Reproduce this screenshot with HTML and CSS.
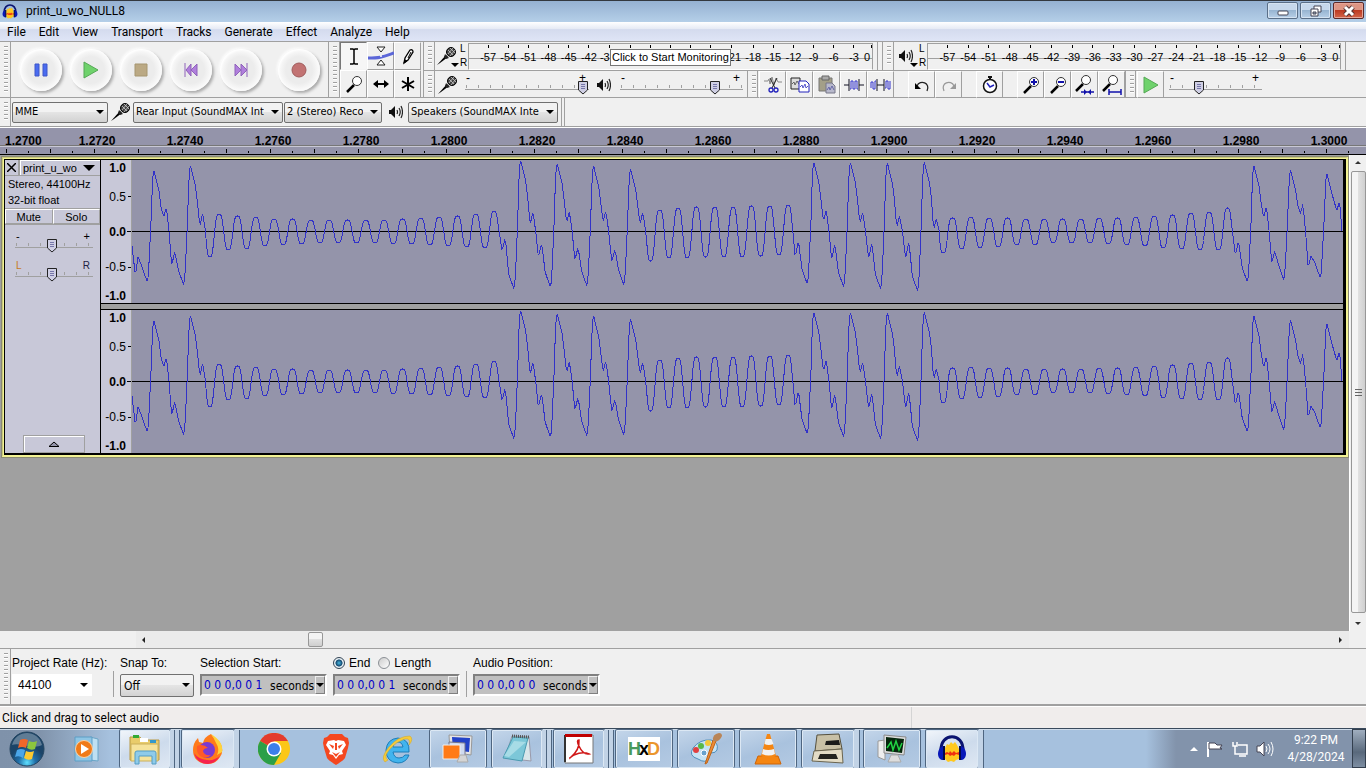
FILE: index.html
```html
<!DOCTYPE html>
<html lang="en">
<head>
  <meta charset="UTF-8" />
  <meta name="viewport" content="width=device-width, initial-scale=1" />
  <title>print_u_wo_NULL8</title>
  <link rel="stylesheet" href="styles.css">
</head>
<body>
  <!-- shared icons -->
  <svg class="defs" width="0" height="0" aria-hidden="true">
    <symbol id="i-mic" viewBox="0 0 20 20">
      <path d="M0 19L9 9l2 2-8 6z" fill="#000"/>
      <path d="M8 8l4 4-3 1-2-2z" fill="#222"/>
      <circle cx="14" cy="6" r="4.500" fill="#444" stroke="#000"/>
      <path d="M11 4l5 5M13 2l5 5M11 8l5-6M13 10l5-6" stroke="#ccc" stroke-width=".8"/>
    </symbol>
    <symbol id="i-spk" viewBox="0 0 14 14">
      <path d="M0 5h2l4-4v12l-4-4H0z" fill="#111"/>
      <path d="M8 5q1 2 0 4M10 3q2.500 4 0 8M12 1q3 6 0 12" fill="none" stroke="#222" stroke-width="1.200"/>
    </symbol>
    <symbol id="i-lens" viewBox="0 0 24 24">
      <path d="M5 20l7-7" stroke="#000" stroke-width="2.500"/>
      <circle cx="15" cy="9" r="4.500" fill="#fff" stroke="#333"/>
    </symbol>
    <symbol id="i-audacity" viewBox="0 0 30 28">
      <path d="M4 16C3 -3 27 -3 26 16" fill="none" stroke="#0a1370" stroke-width="3"/>
      <path d="M8 13l2-4 2 1 2-3 2 2 2-2 2 3 2 4v10l-3 1-2 2-3-1-3 1-3-3z" fill="#ffc81e"/>
      <path d="M8 18l2-1 2 1 1-2 2 2 2-2 2 2 3-1v3l-3-1-2 2-2-1-2 1-2-2-3 1z" fill="#f03010"/>
      <path d="M7 11v14C-1 26-1 12 7 11zM23 11v14c8 1 8-13 0-14z" fill="#0818b8"/>
      <path d="M7 11v14M23 11v14" stroke="#04094a" stroke-width="2"/>
    </symbol>
    <symbol id="i-play" viewBox="0 0 16 18">
      <path d="M1 1l14 8-14 8z" fill="#6fd26c" stroke="#55a855"/>
    </symbol>
  </svg>

  <header class="titlebar">
    <svg class="app-icon" width="16" height="15"><use href="#i-audacity"/></svg>
    <h1>print_u_wo_NULL8</h1>
    <div class="win-btns">
      <button aria-label="Minimize"><svg width="14" height="12"><rect x="2" y="6" width="10" height="4" rx="1" fill="#fff" stroke="#445"/></svg></button>
      <button aria-label="Restore"><svg width="14" height="12" fill="#fff" stroke="#445"><path d="M5 1h7v6H5z"/><path d="M2 4h7v7H2z"/><path d="M4 7h3v2H4z" fill="#9ab"/></svg></button>
      <button class="close" aria-label="Close"><svg width="14" height="12"><path d="M3 2l8 8M11 2l-8 8" stroke="#533" stroke-width="5"/><path d="M3 2l8 8M11 2l-8 8" stroke="#fff" stroke-width="3"/></svg></button>
    </div>
  </header>

  <nav class="menubar">
    <a href="#">File</a><a href="#">Edit</a><a href="#">View</a><a href="#">Transport</a><a href="#">Tracks</a><a href="#">Generate</a><a href="#">Effect</a><a href="#">Analyze</a><a href="#">Help</a>
  </nav>

  <!-- Toolbars -->
  <section class="toolbars">
    <div class="bar transport">
      <i class="grip"></i>
      <button class="round" aria-label="Pause"><svg width="14" height="14"><path d="M1 1h4v12H1zM9 1h4v12H9z" fill="#4a6cf0" stroke="#3f57c8"/></svg></button>
      <button class="round" aria-label="Play"><svg width="16" height="18"><use href="#i-play"/></svg></button>
      <button class="round" aria-label="Stop"><svg width="14" height="14"><path d="M1 1h12v12H1z" fill="#bba984" stroke="#a69670"/></svg></button>
      <button class="round" aria-label="Skip to Start"><svg width="14" height="14"><path d="M7 1v12L2 7zM13 1v12L7 7z" fill="#b07fdc" stroke="#8f62ba"/><path d="M1 0v14" stroke="#8f62ba"/></svg></button>
      <button class="round" aria-label="Skip to End"><svg width="14" height="14"><path d="M1 1v12l6-6zM7 1v12l6-6z" fill="#b07fdc" stroke="#8f62ba"/><path d="M13 0v14" stroke="#8f62ba"/></svg></button>
      <button class="round rec" aria-label="Record"><svg width="16" height="16"><circle cx="8" cy="8" r="7" fill="#c27373" stroke="#a05c5c"/></svg></button>
    </div>

    <div class="bar tools">
      <i class="grip"></i>
      <div class="tool-grid">
        <button class="tb on" aria-label="Selection Tool"><svg width="24" height="24"><path d="M8 5h3l1 1 1-1h3M8 20h3l1-1 1 1h3M12 6v13" fill="none" stroke="#000" stroke-width="1.500"/></svg></button>
        <button class="tb" aria-label="Envelope Tool"><svg width="26" height="24"><path d="M0 14C12 14 14 13 26 9" fill="none" stroke="#5b66d8" stroke-width="3"/><path d="M9 3h8l-4 5zM9 21h8l-4-5z" fill="#fff" stroke="#222"/><circle cx="13" cy="12" r="1" fill="#fff"/></svg></button>
        <button class="tb" aria-label="Draw Tool"><svg width="24" height="24"><path d="M8 19l1-5 5-8q3-1 3 2l-5 8z" fill="#fff" stroke="#000" stroke-width="1.300"/><path d="M8 19l1-3 2 1zM12 14l3-6" stroke="#000"/></svg></button>
        <button class="tb" aria-label="Zoom Tool"><svg width="24" height="24"><use href="#i-lens"/></svg></button>
        <button class="tb" aria-label="Time Shift Tool"><svg width="24" height="24"><path d="M5 12h14" stroke="#000" stroke-width="2"/><path d="M4 12l5-4v8zM20 12l-5-4v8z"/></svg></button>
        <button class="tb" aria-label="Multi-Tool"><svg width="24" height="24"><path d="M12 5v14M6 9l12 7M18 9L6 16" stroke="#000" stroke-width="2"/></svg></button>
      </div>
    </div>

    <div class="stack">
      <div class="row">
        <div class="bar meterbar">
          <i class="grip"></i>
          <button class="meter-menu" aria-label="Recording level"><svg width="20" height="20"><use href="#i-mic"/></svg><i class="caret"></i></button>
          <span class="lr"><b>L</b><b>R</b></span>
          <div class="meter">
            <!-- the marks under the tooltip carry no number -->
            <div class="scale"><span>-57</span><span>-54</span><span>-51</span><span>-48</span><span>-45</span><span>-42</span><span class="cut-right">-3</span><span></span><span></span><span></span><span></span><span></span><span class="cut-left">21</span><span>-18</span><span>-15</span><span>-12</span><span>-9</span><span>-6</span><span>-3</span><span>0</span></div>
            <div class="tooltip">Click to Start Monitoring</div>
          </div>
        </div>
        <div class="bar meterbar">
          <i class="grip"></i>
          <button class="meter-menu" aria-label="Playback level"><svg width="14" height="14"><use href="#i-spk"/></svg><i class="caret"></i></button>
          <span class="lr"><b>L</b><b>R</b></span>
          <div class="meter">
            <div class="scale"><span>-57</span><span>-54</span><span>-51</span><span>-48</span><span>-45</span><span>-42</span><span>-39</span><span>-36</span><span>-33</span><span>-30</span><span>-27</span><span>-24</span><span>-21</span><span>-18</span><span>-15</span><span>-12</span><span>-9</span><span>-6</span><span>-3</span><span>0</span></div>
          </div>
        </div>
      </div>

      <div class="row">
        <div class="bar mixer">
          <i class="grip"></i>
          <svg width="20" height="20"><use href="#i-mic"/></svg>
          <label class="slider rec-vol"><span>-</span><span>+</span><input type="range" min="0" max="100" value="100" aria-label="Recording volume"></label>
          <svg class="spk" width="14" height="14"><use href="#i-spk"/></svg>
          <label class="slider play-vol"><span>-</span><span>+</span><input type="range" min="0" max="100" value="80" aria-label="Playback volume"></label>
        </div>
        <div class="bar edit">
          <i class="grip"></i>
          <button class="tb" aria-label="Cut"><svg width="24" height="24" fill="none"><path d="M3 8h4l1-2 1 5 2-7 2 8 2-7 2 4h4" stroke="#888"/><path d="M9 5l5 10M16 5l-5 10" stroke="#222"/><circle cx="10" cy="17" r="2" stroke="#22b" stroke-width="1.300"/><circle cx="15" cy="17" r="2" stroke="#22b" stroke-width="1.300"/></svg></button>
          <button class="tb" aria-label="Copy"><svg width="24" height="24" fill="none"><path d="M3 5h9v11H3z" fill="#ddd" stroke="#222"/><path d="M4 11l2-2 1 3 2-4 2 3" stroke="#666"/><path d="M11 8h7l3 3v8H11z" fill="#fff" stroke="#22b"/><path d="M12 14l2-2 1 3 2-4 1 4 2-2" stroke="#55c"/></svg></button>
          <button class="tb" aria-label="Paste"><svg width="24" height="24" fill="none"><path d="M4 5h13v13H4z" fill="#a39f88" stroke="#777"/><path d="M7 3h7v4H7z" fill="#aaa" stroke="#666"/><path d="M11 10h6l3 3v7h-9z" fill="#b8b9cc" stroke="#778"/><path d="M12 17l2-3 1 3 2-4 2 4" stroke="#66a"/></svg></button>
          <button class="tb" aria-label="Trim"><svg width="24" height="24" fill="none"><path d="M2 12h5M17 12h5M7 6v12M17 6v12" stroke="#112"/><path d="M8 16h1V8h2v8h2V8h2v8h1" stroke="#33c"/></svg></button>
          <button class="tb" aria-label="Silence"><svg width="24" height="24" fill="none"><path d="M8 12h7M8 6v12M15 6v12" stroke="#112"/><path d="M2 15V9h2v7h2V8h1M16 15h1V8h2v8h2V8" stroke="#33c"/></svg></button>
          <button class="tb gap" aria-label="Undo"><svg width="24" height="24"><path d="M7 13c3-7 14-3 10 5" fill="none" stroke="#222" stroke-width="1.300"/><path d="M5 10v6h6z"/></svg></button>
          <button class="tb" aria-label="Redo"><svg width="24" height="24"><path d="M17 13c-3-7-14-3-10 5" fill="none" stroke="#999" stroke-width="1.300"/><path d="M19 10v6h-6z" fill="#999"/></svg></button>
          <button class="tb gap" aria-label="Sync-Lock"><svg width="24" height="24"><circle cx="12" cy="13" r="6.500" fill="#fff" stroke="#111" stroke-width="1.500"/><path d="M10 4h4M12 4v3" stroke="#111" stroke-width="2"/><path d="M9 10l3 4 4-2" fill="none" stroke="#22b" stroke-width="1.500"/></svg></button>
          <button class="tb gap" aria-label="Zoom In"><svg width="24" height="24"><use href="#i-lens"/><path d="M15 6v6M12 9h6" stroke="#11a" stroke-width="2"/></svg></button>
          <button class="tb" aria-label="Zoom Out"><svg width="24" height="24"><use href="#i-lens"/><path d="M12 9h6" stroke="#11a" stroke-width="2"/></svg></button>
          <button class="tb" aria-label="Fit Selection"><svg width="24" height="24"><use href="#i-lens" width="24" height="24" x="-2" y="-2"/><path d="M8 19h13" stroke="#11a" stroke-width="1.500"/><path d="M14 19l-3-3v6zM15 19l3-3v6z" fill="#11a"/></svg></button>
          <button class="tb" aria-label="Fit Project"><svg width="24" height="24"><use href="#i-lens" width="24" height="24" x="-2" y="-2"/><path d="M9 19h12M9 16v6M21 16v6" stroke="#11a" stroke-width="1.500"/></svg></button>
        </div>
        <div class="bar transcription">
          <i class="grip"></i>
          <button class="tb" aria-label="Play at Speed"><svg width="16" height="18"><use href="#i-play"/></svg></button>
          <label class="slider speed"><span>-</span><span>+</span><input type="range" min="0" max="100" value="30" aria-label="Playback speed"></label>
        </div>
      </div>
    </div>
  </section>

  <section class="devices">
    <i class="grip"></i>
    <select class="combo host" aria-label="Audio host"><option>MME</option></select>
    <svg width="20" height="20"><use href="#i-mic"/></svg>
    <select class="combo wide" aria-label="Recording device"><option>Rear Input (SoundMAX Int</option></select>
    <select class="combo chan" aria-label="Recording channels"><option>2 (Stereo) Reco</option></select>
    <svg class="spk" width="14" height="14"><use href="#i-spk"/></svg>
    <select class="combo wide" aria-label="Playback device"><option>Speakers (SoundMAX Integ</option></select>
    <i class="dock-end"></i>
  </section>

  <div class="timeline">
    <div class="times"><span>1.2700</span><span>1.2720</span><span>1.2740</span><span>1.2760</span><span>1.2780</span><span>1.2800</span><span>1.2820</span><span>1.2840</span><span>1.2860</span><span>1.2880</span><span>1.2900</span><span>1.2920</span><span>1.2940</span><span>1.2960</span><span>1.2980</span><span>1.3000</span></div>
    <div class="ticks"></div>
  </div>

  <!-- Tracks -->
  <main class="project">
    <div class="tracks">
      <article class="track">
        <div class="panel">
          <div class="head"><button class="x" aria-label="Close track"><svg width="9" height="9"><path d="M0 0l9 9M9 0L0 9" stroke="#000" stroke-width="1.500"/></svg></button><button class="name">print_u_wo<i></i></button></div>
          <p>Stereo, 44100Hz<br>32-bit float</p>
          <div class="ms"><button>Mute</button><button>Solo</button></div>
          <label class="slider"><span>-</span><span>+</span><input type="range" min="0" max="100" value="47" aria-label="Gain"></label>
          <label class="slider pan"><span>L</span><span>R</span><input type="range" min="0" max="100" value="47" aria-label="Pan"></label>
          <button class="collapse" aria-label="Collapse"><svg width="12" height="6"><path d="M1 5.500h10L6 1z" fill="#9595aa" stroke="#000"/></svg></button>
        </div>
        <div class="channels">
          <div class="channel">
            <div class="vruler"><b>1.0</b><span>0.5</span><b>0.0</b><span>-0.5</span><b>-1.0</b></div>
            <svg class="wave" viewBox="0 0 1212 143" preserveAspectRatio="none"><path class="zero" d="M0 71.500H1212"/><path class="line"/></svg>
          </div>
          <div class="channel">
            <div class="vruler"><b>1.0</b><span>0.5</span><b>0.0</b><span>-0.5</span><b>-1.0</b></div>
            <svg class="wave" viewBox="0 0 1212 143" preserveAspectRatio="none"><path class="zero" d="M0 71.500H1212"/><path class="line"/></svg>
          </div>
        </div>
      </article>
    </div>
    <div class="vscroll"><i class="up"></i><div class="thumb"></div><i class="down"></i></div>
  </main>
  <div class="hscroll"><div class="rail"><i class="left"></i><div class="thumb"></div><i class="right"></i></div></div>

  <!-- Selection toolbar -->
  <section class="selection">
    <i class="grip"></i>
    <div class="field rate"><label for="rate">Project Rate (Hz):</label><select id="rate"><option>44100</option></select></div>
    <i class="sep"></i>
    <div class="field snap"><label for="snap">Snap To:</label><select id="snap" class="combo"><option>Off</option></select></div>
    <div class="field"><label for="start">Selection Start:</label><div class="time"><input id="start" value="0 0 0,0 0 1"><span>seconds</span><button aria-label="Start format"></button></div></div>
    <div class="field">
      <div class="radios"><label><input type="radio" name="len" checked>End</label><label><input type="radio" name="len">Length</label></div>
      <div class="time"><input value="0 0 0,0 0 1" aria-label="Selection end"><span>seconds</span><button aria-label="End format"></button></div>
    </div>
    <i class="sep"></i>
    <div class="field"><label for="pos">Audio Position:</label><div class="time"><input id="pos" value="0 0 0,0 0 0"><span>seconds</span><button aria-label="Position format"></button></div></div>
  </section>

  <footer class="status"><span>Click and drag to select audio</span><span></span></footer>

  <!-- Taskbar -->
  <nav class="taskbar">
    <button class="orb" aria-label="Start"><svg width="38" height="38">
      <defs><radialGradient id="orb" cy=".9"><stop offset="0" stop-color="#5fe0ff"/><stop offset=".5" stop-color="#1f6ea8"/><stop offset="1" stop-color="#1b4468"/></radialGradient></defs>
      <circle cx="19" cy="19" r="17" fill="url(#orb)" stroke="#24445f"/><path d="M4 15C8-1 30-1 34 15 25 20 12 12 4 15z" fill="#fff" opacity=".3"/>
      <path d="M12 10q4-2 8 0l-2 8q-4-2-8 0z" fill="#f0672a"/><path d="M21 11q4 2 8 0l-2 8q-4 2-8-1z" fill="#8cc63e"/><path d="M9 20q4-2 8 0l-2 8q-4-3-8-1z" fill="#4ba6e8"/><path d="M18 21q4 2 8 0l-2 8q-4 2-8-1z" fill="#fcc92f"/></svg></button>
    <button class="pin" aria-label="Media Player"><svg width="30" height="30"><path d="M18 3l8 2v22l-8-1z" fill="#bfe0f2" stroke="#6ba6c8"/><path d="M3 3h17v24H3z" fill="#8ec5e4" stroke="#5c9dc4"/><circle cx="12" cy="15" r="8.500" fill="#f07a18" stroke="#fbd3a6"/><path d="M9 10l8 5-8 5z" fill="#fff"/></svg></button>
    <button class="task on w52 pile2" aria-label="Explorer"><svg width="34" height="32"><path d="M2 4h10l2 3h17v20H2z" fill="#e9cc6b" stroke="#b89842"/><path d="M5 2h6v3H5z" fill="#3a3"/><path d="M12 5h8v4h-8z" fill="#fff"/><path d="M22 7h6v3h-6z" fill="#39c"/><path d="M3 11h27v17H3z" fill="#f6e39a" stroke="#cbb05a"/><path d="M7 31V20q0-2 2-2h17q2 0 2 2v11h-4v-8H11v8z" fill="#8fcbe9" stroke="#559dc5"/></svg></button>
    <button class="task on w53 pile1" aria-label="Firefox"><svg width="32" height="32"><path d="M19 1q3 5 8 7 6 9 1 16-5 8-14 7Q1 29 1 17q0-7 5-12l1 4 4 1q1-6 8-9z" fill="#ff7a1a"/><path d="M19 1q3 4 5 9 4 6 1 12l5-3Q32 9 19 1z" fill="#ffd23a"/><circle cx="15" cy="17" r="8" fill="#7a3ad0"/><path d="M5 13q6-3 11 2-4 0-5 3 1 5 8 4-5 5-11 1-4-4-3-10z" fill="#ff5a28"/><path d="M2 20q3 11 14 11 8-1 12-8-6 5-13 4Q6 26 2 20z" fill="#f5224f"/></svg></button>
    <button class="pin" aria-label="Chrome"><svg width="32" height="32"><circle cx="16" cy="16" r="16" fill="#fbc718"/><path d="M16 16L2.100 8A16 16 0 0 1 29.900 8z" fill="#e33b2e"/><path d="M16 16L2.100 8A16 16 0 0 0 16 32l7-12z" fill="#2b9f48"/><path d="M16 8h14l-7 12z" fill="#fbc718"/><circle cx="16" cy="16" r="7.500" fill="#fff"/><circle cx="16" cy="16" r="6" fill="#3c7fea"/></svg></button>
    <button class="pin" aria-label="Brave"><svg width="28" height="32"><path d="M8 1h12l3 3 3 1 1 5-1 5-3 10q-1 2-9 7-8-5-9-7L2 15l-1-5 1-5 3-1z" fill="#f4471f"/><path d="M6 8l6-1 2 1 2-1 6 1 2 4-4 6 1 3-4 1-3 4-3-4-4-1 1-3-4-6z" fill="#fff"/><path d="M7 11l5 2-1 3zM21 11l-5 2 1 3zM10 19l4 2 4-2-4 5zM13 10h2v7h-2z" fill="#f4471f"/></svg></button>
    <button class="pin" aria-label="Internet Explorer"><svg width="34" height="32"><path d="M28 19H12q1 6 6 6 4 0 6-3h4q-3 8-11 8Q5 29 5 17 6 6 17 5q12 1 11 14zM12 14h10q-1-5-5-5-4 0-5 5z" fill="#41b4ee" stroke="#1c7db8"/><path d="M4 29q-5-4 4-15T29 3q4 3-1 9 2-7-4-6-8 2-15 10T7 27z" fill="#f5cb3b" stroke="#d3a520" stroke-width=".5"/></svg></button>
    <button class="task w58" aria-label="Virtual machines"><svg width="34" height="32"><path d="M8 2l23 1-1 19-21-3z" fill="#e4e4e4" stroke="#999"/><path d="M11 4l18 1-1 14-16-2z" fill="#2343c8"/><path d="M8 9l16 1v14H8z" fill="#cfdaf0" stroke="#778"/><path d="M2 12h17v14H2z" fill="#ff7a16" stroke="#eee"/><path d="M19 22h6l2 7H16z" fill="#d5d5d5" stroke="#aaa"/></svg></button>
    <button class="task w52 pile2" aria-label="Notepad"><svg width="32" height="32"><path d="M11 3l17 1 2 24-26-3z" fill="#d9e6ea" stroke="#99a"/><path d="M12 4l15 1-6 23-19-3z" fill="#7cc7d8" stroke="#4a9ab0"/><path d="M11 3l17 1" stroke="#555" stroke-width="3" stroke-dasharray="1 1"/><path d="M13 8l12 1L8 24l-5-1z" fill="#c4eaf0" opacity=".6"/></svg></button>
    <button class="task w52 pile2" aria-label="Adobe Reader"><svg width="30" height="30"><path d="M1 1h28v28H1z" fill="#fff" stroke="#777"/><path d="M1 1v27" stroke="#333" stroke-width="2"/><path d="M1 0h27v3H1z" fill="#c00000"/><path d="M6 24Q16 16 15 6q-3 0 0 6 4 9 10 8-6-3-15 1-4 3-4 2z" fill="none" stroke="#d01818" stroke-width="1.500"/></svg></button>
    <button class="task w58" aria-label="HxD"><span class="hxd"><b>H</b><b>x</b><b>D</b></span></button>
    <button class="task w58" aria-label="Paint"><svg width="34" height="32"><path d="M4 15q7-9 18-8 8 2 6 10-1 3-6 3-3 1-2 5-3 6-11 1Q-1 23 4 15z" fill="#c6e3f4" stroke="#4f8fbd"/><circle cx="7" cy="17" r="3" fill="#e04040"/><circle cx="12" cy="13" r="3" fill="#58b848"/><circle cx="19" cy="10" r="3" fill="#f4c83a"/><circle cx="15" cy="20" r="3" fill="#68a2cc" stroke="#fff"/><path d="M27 8l-9 22-2 1 8-24z" fill="#ef8b32" stroke="#bd6418"/><path d="M24 8q-1-7 6-8 3 0 3 3-3 7-9 5z" fill="#b98558"/></svg></button>
    <button class="task w58" aria-label="VLC"><svg width="30" height="32"><path d="M5 23h20l3 8H2z" fill="#f58612" stroke="#cc6508"/><path d="M14 1h3l6 22q-7 5-15 0z" fill="#f58612"/><path d="M12.500 6h6l2 5q-5 2-9 0zM10 16q5 2 11 0l1 5q-6 3-13 0z" fill="#f2f2f2"/></svg></button>
    <button class="task w53 pile1" aria-label="DOSBox"><svg width="34" height="32"><path d="M6 2l22-1 3 15-27 2z" fill="#c8c0a6" stroke="#55503e"/><path d="M15 8l13-1 1 5H14z" fill="#1b1b1b"/><path d="M3 18l28-2 1 14-31-2z" fill="#e3dcc6" stroke="#6a644e"/><path d="M9 21h16l2 5H7z" fill="#23231f"/></svg></button>
    <button class="task w58" aria-label="System monitor"><svg width="34" height="32"><path d="M3 8l7-1v20l-7-3z" fill="#eee" stroke="#999"/><path d="M9 2l22 2-2 18-20-2z" fill="#ddd" stroke="#888"/><path d="M11 4l18 2-2 14-16-2z" fill="#06250c"/><path d="M12 15l4-6 2 8 3-9 3 9 3-7" fill="none" stroke="#21d443" stroke-width="1.500"/><path d="M16 22h7l3 7H13z" fill="#ddd" stroke="#aaa"/></svg></button>
    <button class="task on w53 pile1" aria-label="Audacity"><svg width="30" height="28"><use href="#i-audacity"/></svg></button>
    <div class="tray">
      <svg width="10" height="6"><path d="M1 5l4-4 4 4z" fill="#fff"/></svg>
      <svg width="18" height="18"><path d="M2 2v15" stroke="#fff" stroke-width="2"/><path d="M3 3h6l2 2h5l-2 3 2 1H9L8 9H3z" fill="#fff" stroke="#445"/></svg>
      <svg width="18" height="18" fill="none" stroke="#fff" stroke-width="1.500"><path d="M7 5h9v9H6M8 16h7M2 2v4h4V2M4 6v8h3"/></svg>
      <svg width="18" height="18"><path d="M1 6h3l4-4v14l-4-4H1z" fill="#fff" stroke="#445"/><path d="M10 6q2 3 0 6M12 4q4 5 0 10M15 2q4 7 0 14" fill="none" stroke="#fff"/></svg>
      <time>9:22 PM<br>4/28/2024</time>
    </div>
    <button class="show-desktop" aria-label="Show desktop"></button>
  </nav>

  <script src="waveform.js"></script>
</body>
</html>
```
FILE: styles.css
```css
* { box-sizing: border-box; }
html, body { height: 100%; }
body {
  margin: 0;
  display: flex;
  flex-direction: column;
  overflow: hidden;
  background: #f0f0f0;
  color: #000;
  font: 12px/16px "Liberation Sans", Arial, sans-serif;
}
button, select, input { font: inherit; color: inherit; margin: 0; padding: 0; border: 0; background: none; }
button { display: flex; align-items: center; justify-content: center; }
a { color: inherit; text-decoration: none; }
svg { flex: none; display: block; }
.defs { position: absolute; }

/* title + menu */
.titlebar {
  display: flex;
  height: 22px;
  flex: none;
  border-top: 1px solid #33383f;
  background: linear-gradient(#95b1d2, #b5cfe8);
}
.app-icon { margin: 3px 8px 0 2px; }
.titlebar h1 { flex: 1; margin: 0; font: 12px/20px Roboto, sans-serif; }
.win-btns { display: flex; gap: 2px; padding: 1px 2px 0 0; }
.win-btns button {
  width: 31px;
  height: 17px;
  border: 1px solid #5a6f88;
  border-radius: 2px;
  background: linear-gradient(#c6d8ec 45%, #98b5d2 50%, #b8d0e8);
  box-shadow: inset 0 0 0 1px #d5e3f2;
}
.win-btns .close { border-color: #5c2a2a; background: linear-gradient(#dd9584 45%, #bd3a22 50%, #d4654a); box-shadow: inset 0 0 0 1px #e6a597; }
.menubar {
  display: flex;
  flex: none;
  gap: 13px;
  height: 20px;
  padding-left: 7px;
  border-bottom: 1px solid #a0a0a0;
  background: linear-gradient(#fff, #e7ebf5 35%, #d4dbee 40%, #dfe5f6);
  font: 12px/20px Roboto, sans-serif;
}

/* toolbars */
.toolbars { display: flex; flex: none; height: 56px; border-bottom: 1px solid #a0a0a0; }
.bar { display: flex; align-items: center; border-right: 1px solid #a0a0a0; }
.grip {
  flex: none;
  align-self: stretch;
  width: 11px;
  border-right: 1px solid #a0a0a0;
  background: repeating-linear-gradient(#a0a0a0 0 1px, #fff 1px 2px, transparent 2px 4px) 4px 4px / 4px calc(100% - 8px) no-repeat;
}
.transport { width: 329px; }
.round {
  width: 42px;
  height: 42px;
  margin-left: 8px;
  border-radius: 50%;
  background: radial-gradient(#ececec 45%, #fafafa 68%);
  box-shadow: 2px 2px 3px #aaa, -1px -1px 3px #fff, inset 1px 1px 2px #fff;
}
.grip + .round { margin-left: 9px; }
.rec { margin-left: 16px; }
.tools { width: 95px; }
.tool-grid { display: grid; grid-template-columns: repeat(3, 27px); grid-auto-rows: 28px; }
.tb { flex: none; width: 27px; height: 27px; border: 1px solid; border-color: #fff #a0a0a0 #a0a0a0 #fff; }
.tool-grid .tb { height: 28px; }
.tb.on { border-color: #777 #f4f4f4 #f4f4f4 #777; background: #f6f6f6; }
.tb.gap { margin-left: 14px; }
.stack { flex: 1; display: flex; flex-direction: column; }
.row { display: flex; height: 28px; }
.row + .row { border-top: 1px solid #a0a0a0; }

.meterbar { width: 454px; height: 28px; padding-right: 4px; }
.meterbar + .meterbar { width: 464px; margin-left: 4px; border-left: 1px solid #a0a0a0; }
.meter-menu { width: 24px; height: 24px; position: relative; }
.meter-menu .caret { position: absolute; right: 0; bottom: 1px; border: 4px solid transparent; border-top-color: #000; border-bottom: 0; }
.lr { width: 9px; display: flex; flex-direction: column; font: 10px/14px "Liberation Sans", sans-serif; padding-left: 1px; }
.lr b { font-weight: normal; }
.meter {
  position: relative;
  flex: 1;
  height: 27px;
  border: 1px solid #a0a0a0;
  border-bottom-color: #fff;
  background: linear-gradient(#a0a0a0, #a0a0a0) 0 14px / 100% 1px no-repeat;
}
.scale { display: flex; padding-left: 9px; font-size: 11px; line-height: 26px; }
.scale span { flex: 1 0 0; height: 26px; text-align: center; background: linear-gradient(#000, #000) 50% 1px / 1px 3px no-repeat; }
.scale span:last-child { flex: none; width: 8px; text-align: left; background-position: 100% 1px; }
.scale .cut-right { text-align: left; padding-left: 1px; }
.scale .cut-left { text-align: right; padding-right: 2px; }
.tooltip {
  position: absolute;
  left: 141px;
  top: 5px;
  padding: 0 1px;
  border: 1px solid #767676;
  background: #fff;
  font-size: 11px;
  line-height: 15px;
  white-space: nowrap;
}

/* sliders: caption line above, ticks and pointer below */
.slider {
  display: grid;
  grid-template-columns: 1fr auto;
  grid-template-rows: 9px 14px;
  line-height: 13px;
}
.slider span { padding: 0 3px 0 1px; }
.slider input {
  grid-column: 1 / 3;
  width: 100%;
  height: 14px;
  appearance: none;
  background:
    linear-gradient(#a0a0a0, #a0a0a0) 0 8px / 100% 1px no-repeat,
    repeating-linear-gradient(90deg, #a0a0a0 0 1px, transparent 1px 12px) 1px 4px / 100% 3px no-repeat;
}
.slider input::-webkit-slider-thumb {
  appearance: none;
  width: 12px;
  height: 14px;
  background: url("data:image/svg+xml,%3Csvg xmlns='http://www.w3.org/2000/svg' width='12' height='14'%3E%3Cpath d='M1.500.500h9v8.500L6 13l-4.500-4z' fill='%23cfcfe4' stroke='%23222'/%3E%3Cpath d='M4 3.500h4M4 5.500h4M4 7.500h4' stroke='%2377a'/%3E%3C/svg%3E");
}
.mixer { width: 324px; }
.mixer > svg { margin-left: 3px; }
.mixer > .spk { margin-left: 8px; }
.bar > .slider { margin-bottom: 3px; }
.rec-vol { width: 124px; margin-left: 7px; }
.play-vol { width: 123px; margin-left: 9px; }
.edit .grip, .transcription .grip { width: 10px; margin-right: 1px; }
.transcription { border: 0; }
.speed { width: 93px; margin-left: 5px; }
.speed input { background-size: 100% 1px, 91px 3px; }

.devices { display: flex; align-items: center; flex: none; height: 29px; border-bottom: 1px solid #a0a0a0; }
.devices svg { margin: 0 2px 0 3px; }
.devices .spk { margin: 0 5px 0 7px; }
.combo {
  appearance: none;
  height: 21px;
  padding: 0 18px 0 2px;
  border: 1px solid #707070;
  border-radius: 2px;
  background:
    url("data:image/svg+xml,%3Csvg xmlns='http://www.w3.org/2000/svg' width='8' height='5'%3E%3Cpath d='M0 0h8L4 4z'/%3E%3C/svg%3E") right 3px center no-repeat,
    linear-gradient(#f2f2f2 45%, #e4e4e4 50%, #d2d2d2);
  font: 11px/18px "DejaVu Sans Condensed", "DejaVu Sans", sans-serif;
}
.host { width: 96px; margin-left: 1px; }
.wide { width: 150px; margin-right: 1px; }
.chan { width: 98px; }
.dock-end { align-self: stretch; width: 4px; margin-left: 2px; border: solid #a0a0a0; border-width: 0 1px; }

.timeline { flex: none; height: 28px; overflow: hidden; border-top: 1px solid #fff; border-bottom: 1px solid #000; background: #9494aa; }
.times { display: flex; height: 18px; padding-top: 5px; border-bottom: 1px solid #777; box-shadow: 0 1px #c8c8d4; font-weight: bold; }
.times span { flex: 0 0 88px; text-align: center; padding-left: 2px; }
.times span:first-child { flex-basis: 52px; text-align: left; padding-left: 5px; }
.ticks {
  height: 8px;
  background:
    repeating-linear-gradient(90deg, #000 0 1px, transparent 1px 44px) 6px 3px / 100% 4px no-repeat,
    repeating-linear-gradient(90deg, #000 0 1px, transparent 1px 22px) 6px 5px / 100% 2px no-repeat;
}

/* tracks */
.project { display: flex; flex: 1; min-height: 0; }
.tracks { flex: 1; min-width: 0; padding: 2px 1px 0 2px; background: #a0a0a0; }
.track {
  display: flex;
  padding: 2px 3px 2px 2px;
  border: 1px solid #c9c97a;
  border-right: 2px solid #f3f394;
  border-bottom: 2px solid #f3f394;
  outline: 1px solid #8a8a74;
  background: #000;
  box-shadow: inset 0 1px #f3f394, inset 1px 0 #f3f394;
}
.panel {
  display: flex;
  flex-direction: column;
  width: 95px;
  margin-right: 1px;
  background: #c8c8d8;
  font-size: 11px;
}
.head { display: flex; height: 16px; border-bottom: 1px solid #a0a0a0; }
.x { width: 15px; border-right: 2px solid #a0a0a0; }
.name { flex: 1; gap: 6px; justify-content: flex-start; padding-left: 2px; border: solid #fff; border-width: 1px 0 0 1px; }
.name i { border: 6px solid transparent; border-top-color: #000; border-bottom: 0; }
.panel p { margin: 0; padding: 0 3px; line-height: 16px; }
.ms { display: flex; height: 17px; border: solid #a0a0a0; border-width: 1px 0; }
.ms button { flex: 1; border: 1px solid; border-color: #fff #a0a0a0 #a0a0a0 #fff; }
.panel .slider { width: 78px; margin: 5px 0 0 10px; }
.panel .slider input { background-size: 100% 1px, 74px 3px; }
.panel .pan { margin-top: 6px; font-size: 10px; }
.pan span:first-child { color: #c77a20; }
.pan span + span { color: #224; }
.collapse { width: 62px; height: 18px; margin: auto 0 0 18px; border: 1px solid #a0a0a0; box-shadow: inset 1px 1px #fff; }
.channels {
  flex: 1;
  min-width: 0;
  display: flex;
  flex-direction: column;
  gap: 7px;
  background: linear-gradient(#000 1px, #a0a0a0 1px 6px, #000 6px) 0 143px / 100% 7px no-repeat;
}
.channel { display: flex; height: 143px; }
.vruler {
  display: grid;
  flex: none;
  grid-template-rows: 15px 44px 26px 44px 14px;
  align-items: center;
  width: 31px;
  padding-right: 5px;
  background:
    linear-gradient(#000, #000) 100% 36px / 3px 1px no-repeat,
    linear-gradient(#000, #000) 100% 71px / 4px 1px no-repeat,
    linear-gradient(#000, #000) 100% 107px / 3px 1px no-repeat,
    #c8c8d8;
  border-right: 1px solid #a0a0a0;
  text-align: right;
}
.wave { flex: 1; min-width: 0; height: 143px; background: #9494aa; }
.wave path { fill: none; shape-rendering: crispEdges; vector-effect: non-scaling-stroke; }
.zero { stroke: #000; }
.line { stroke: #3232c8; }

/* scrollbars */
.vscroll { width: 17px; display: flex; flex-direction: column; align-items: center; background: #f0f0f0; border-left: 1px solid #fff; }
.vscroll i { flex: none; margin: 6px; border: 3px solid transparent; }
.vscroll .up { border-bottom-color: #333; border-top: 0; margin-bottom: 7px; }
.vscroll .down { border-top-color: #333; border-bottom: 0; margin: 9px 0 6px; }
.vscroll .thumb {
  flex: 1;
  width: 15px;
  border: 1px solid #979797;
  border-radius: 2px;
  background:
    repeating-linear-gradient(#666 0 1px, transparent 1px 3px) center / 7px 7px no-repeat,
    linear-gradient(90deg, #f4f4f4 45%, #e0e0e0 50%, #cfcfcf);
}
.hscroll { flex: none; height: 18px; padding: 0 17px 0 136px; border-bottom: 1px solid #a0a0a0; }
.rail { display: flex; align-items: center; height: 17px; background: #ebebeb; }
.rail i { border: 3px solid transparent; }
.rail .left { border-right-color: #222; border-left: 0; margin-left: 6px; }
.rail .right { border-left-color: #222; border-right: 0; margin: 0 7px 0 auto; }
.rail .thumb { width: 15px; height: 15px; margin-left: 163px; border: 1px solid #979797; border-radius: 2px; background: linear-gradient(#f4f4f4 45%, #e0e0e0 50%, #cfcfcf); }

/* selection toolbar */
.selection { display: flex; flex: none; height: 57px; gap: 6px; border-bottom: 2px solid #a0a0a0; }
.selection > .grip { margin-right: -5px; }
.field { display: flex; flex-direction: column; gap: 3px; padding-top: 6px; }
.field .combo { height: 23px; padding-left: 3px; font-size: 12px; }
.rate { width: 95px; white-space: nowrap; }
.rate select {
  appearance: none;
  width: 80px;
  height: 22px;
  padding-left: 6px;
  background: #fff url("data:image/svg+xml,%3Csvg xmlns='http://www.w3.org/2000/svg' width='8' height='5'%3E%3Cpath d='M0 0h8L4 4z'/%3E%3C/svg%3E") right 4px center no-repeat;
}
.snap { width: 74px; }
.sep { width: 1px; height: 26px; margin-top: 22px; background: #a0a0a0; }
.time {
  display: flex;
  width: 127px;
  height: 22px;
  border: 2px solid;
  border-color: #808080 #fff #fff #808080;
  background: #c0c0c0;
  font: 12px/20px "DejaVu Sans Condensed", "DejaVu Sans", sans-serif;
}
.time input { width: 68px; padding-left: 2px; color: #0000c8; }
.time span { flex: 1; }
.time button { width: 10px; border: 1px solid; border-color: #eee #808080 #808080 #eee; }
.time button::after { content: ""; border: 4px solid transparent; border-top-color: #000; border-bottom: 0; }
.radios { display: flex; gap: 8px; height: 16px; }
.radios label { display: flex; gap: 4px; }
.radios input {
  appearance: none;
  width: 12px;
  height: 12px;
  margin-top: 2px;
  border: 1px solid #8a8f94;
  border-radius: 50%;
  background: linear-gradient(135deg, #ccc, #fff);
}
.radios input:checked { border-color: #345; background: radial-gradient(#48b8e0, #12466e 45%, #e8f0f4 55%); }

.status { display: flex; flex: none; height: 22px; border-top: 1px solid #fff; background: #f0edec; font: 12px/22px Roboto, sans-serif; }
.status span:first-child { flex: 2; padding-left: 2px; border-right: 1px solid #d4d4d4; }
.status span:last-child { flex: 1; }

/* taskbar */
.taskbar {
  display: flex;
  flex: none;
  height: 40px;
  border-top: 1px solid #3a4a5c;
  box-shadow: inset 0 1px #cfdcea;
  background: linear-gradient(90deg, #7f92aa, #8093ab 40px, #a6c1de 110px, #a6c1de calc(100% - 220px), #8293ab calc(100% - 190px));
}
.orb { width: 54px; }
.pin { width: 62px; }
.orb + .pin { width: 65px; }
.task {
  position: relative;
  margin-right: 4px;
  border: 1px solid #4e6580;
  border-bottom: 0;
  border-radius: 2px;
  background: linear-gradient(160deg, #c4d6ea, #a9c2de 50%, #b4cae3);
  box-shadow: inset 0 0 0 1px #dce8f4;
}
.task.on { background: linear-gradient(160deg, #f2f6fb, #cddbec 50%, #dfe8f3); }
.w52 { width: 52px; }
.w53 { width: 54px; }
.w58 { width: 58px; }
.pile1 { margin-right: 8px; }
.pile2 { margin-right: 10px; }
.pile1::after, .pile2::after {
  content: "";
  position: absolute;
  top: 0;
  bottom: 0;
  left: 100%;
  width: 5px;
  border-right: 1px solid #4e6580;
  background: #c2d3e6;
}
.pile2::after { width: 9px; background: linear-gradient(90deg, #c2d3e6 4px, #4e6580 4px 5px, #c2d3e6 5px); }
.hxd { display: flex; background: #fff; font: bold 18px/24px "Liberation Sans", sans-serif; }
.hxd b:nth-child(1) { color: #4a9a5c; }
.hxd b:nth-child(2) { margin: 0 -2px; }
.hxd b:nth-child(3) { color: #eb962c; }
.tray { display: flex; align-items: center; gap: 7px; margin-left: auto; }
.tray time { width: 70px; color: #fff; text-align: center; font: 12px/17px Roboto, sans-serif; }
.show-desktop { width: 14px; margin-left: 1px; border: 1px solid #333f4e; background: linear-gradient(#a0aebf, #59697c 60%, #7d8ea2); }
```
FILE: waveform.js
```js
// Samples are in view units: x runs 0-1212, the zero line is y = 71.
const HALF = 9.175;

// [peak x, notch low, notch high, trough, peak, shoulder low, shoulder high]
const pulses = [
  [22, 112, 97, 121, 11, 56, 49],
  [58.5, 103, 93, 124, 6, 64, 54],
  [389, 89, 80, 128, 1, 62, 53],
  [425.5, 95, 85, 126, 4, 60, 53],
  [462, 98, 89, 125, 6, 60, 52],
  [499, 100, 91, 124, 9, 62, 53],
  [682.5, 94, 83, 123, 3, 59, 51],
  [719, 97, 86, 126, 3, 61, 53],
  [756, 96, 85, 128, 3, 65, 56],
  [793, 96, 84, 130, 2, 67, 59],
  [1123, 93, 83, 121, 6, 56, 48],
  [1159.5, 101, 92, 119, 10, 53, 46],
  [1196, 105, 96, 117, 14, 50, 43]
];

// [first trough x, alternating trough / crest heights]
const ripples = [
  [78, [97, 54, 90, 56, 89, 57, 86, 59, 85, 59, 84, 60, 83, 60, 83, 60, 83, 60, 83, 60, 84, 59, 84, 58, 85, 57, 86, 56, 87, 54, 88, 51]],
  [519, [101, 50, 98, 48, 98, 47, 97, 47, 97, 47, 97, 46, 96, 46, 95, 45]],
  [812, [93, 58, 89, 57, 88, 58, 87, 58, 85, 59, 85, 59, 83, 59, 83, 59, 83, 58, 84, 58, 85, 57, 86, 56, 88, 55, 89, 53, 90, 52, 90, 48]]
];

const points = [];
pulses.forEach(([x, n1, n2, low, top, s1, s2]) => {
  points.push(
    [x - 19, n1], [x - 18, n1 - 1], [x - 16, n2], [x - 15, n2 + 2],
    [x - 12, low - 14], [x - 10, low - 8], [x - 7, low], [x - 6, low - 3], [x - 5, low - 18],
    [x - 3, 62], [x - 2, top + 25], [x - 1, top + 5], [x, top], [x + 1, top + 4],
    [x + 5, top + 20], [x + 7, Math.min(top + 36, s1 - 9)], [x + 9, s1 - 2], [x + 10, s1],
    [x + 12, s2], [x + 13, s2 + 4], [x + 15, 71]
  );
});
ripples.forEach(([x0, ys]) => {
  ys.forEach((y, i) => {
    const x = x0 + i * HALF;
    const d = y > 71 ? -1 : 1;
    const amp = Math.abs(y - 71);
    points.push(
      [x - 3.5, y + d * amp * 0.5], [x - 2.5, y + d * amp * 0.17], [x - 1.5, y + d * amp * 0.03],
      [x, y],
      [x + 1.5, y + d * amp * 0.03], [x + 2.5, y + d * amp * 0.17], [x + 3.5, y + d * amp * 0.5]
    );
  });
});
points.sort((a, b) => a[0] - b[0]);

const d = 'M0 86L' + points.filter(p => p[0] > 0 && p[0] <= 1212).map(p => p[0] + ' ' + p[1]).join('L');
document.querySelectorAll('.line').forEach(el => el.setAttribute('d', d));
```
